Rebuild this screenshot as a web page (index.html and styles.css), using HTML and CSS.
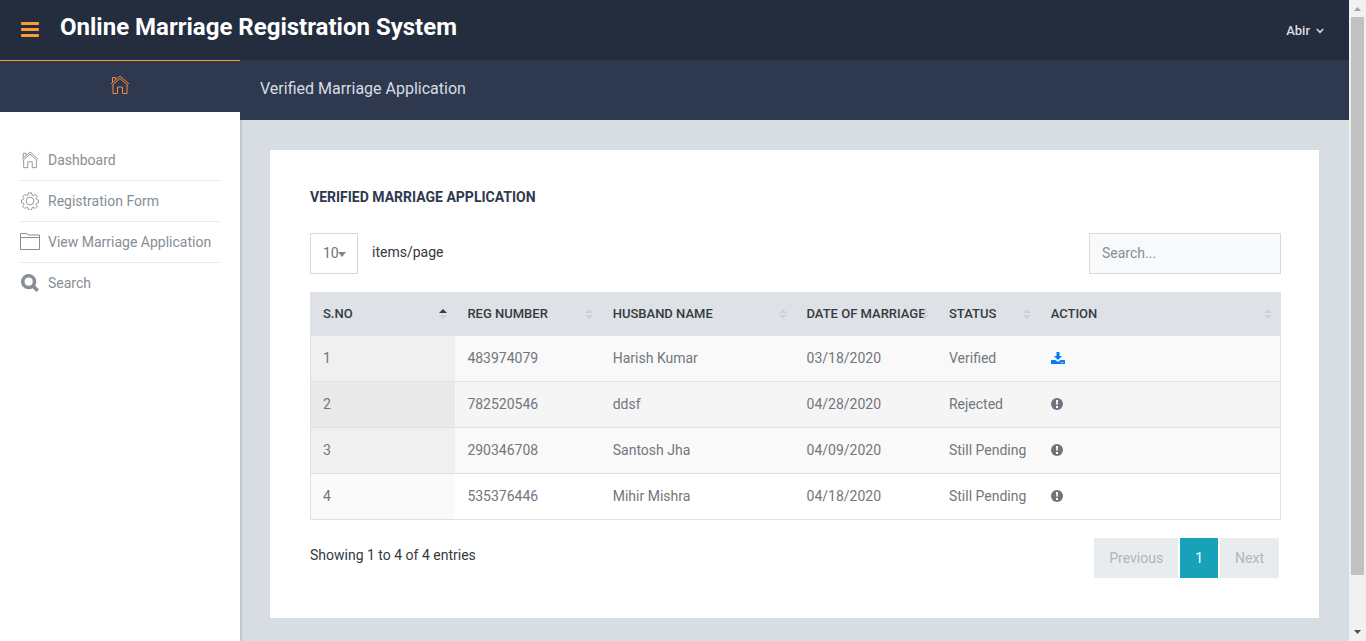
FILE: index.html
```html
<!DOCTYPE html>
<html lang="en">
<head>
<meta charset="utf-8">
<title>Online Marriage Registration System</title>
<link rel="stylesheet" href="styles.css">
</head>
<body>
<svg class="defs" aria-hidden="true">
  <symbol id="home" viewBox="0 0 20 20"><path d="M1 9 10 1l9 8M2 10.500 10 3.500l8 7M2.500 7.500V2.500h3v2.300M3 10V18.500h4.500v-6.500h5v6.500H17V10"/></symbol>
  <symbol id="gear" viewBox="0 0 20 20"><path d="M8.200 1h3.600l.5 2.500 1.300.6 2.200-1.500 2.300 2.400-1.400 2.200.6 1.200 2.200.5v3l-2.200.6-.6 1.400 1.400 2.100-2.300 2.300-2.200-1.300-1.300.5-.5 2.400H8.200l-.5-2.400-1.300-.5-2.200 1.300-2.300-2.300 1.400-2.100-.6-1.400-2.200-.6v-3l2.200-.5.6-1.200-1.400-2.200 2.300-2.400 2.200 1.500 1.300-.6z"/><circle cx="10" cy="10" r="4.300"/></symbol>
  <symbol id="folder" viewBox="0 0 20 20"><path d="M.5 17.500V1.500h6.500l1 1.500h11.500v14.500zM.5 5.500h19"/></symbol>
  <symbol id="alert" viewBox="0 0 12 12"><circle cx="6" cy="6" r="6" fill="currentColor"/><path d="M5 2h2l-.3 4.700H5.300zM5 8h2v2H5z" fill="#fff"/></symbol>
</svg>
<div class="page">
  <header class="header">
    <button class="toggle" aria-label="Toggle menu"><span></span><span></span><span></span></button>
    <h1 class="brand">Online Marriage Registration System</h1>
    <button class="user">Abir <svg class="chevron" viewBox="0 0 8 6"><path d="M.8 1 4 4.300 7.200 1"/></svg></button>
  </header>
  <div class="layout">
    <aside class="sidebar">
      <a class="home-tab" href="#" aria-label="Home"><svg class="icon"><use href="#home"/></svg></a>
      <nav class="nav">
        <a href="#"><svg class="icon icon-thin"><use href="#home"/></svg>Dashboard</a>
        <a href="#"><svg class="icon icon-thin"><use href="#gear"/></svg>Registration Form</a>
        <a href="#"><svg class="icon"><use href="#folder"/></svg>View Marriage Application</a>
        <a href="#"><svg class="icon icon-bold" viewBox="0 0 20 20"><circle cx="8.500" cy="8.500" r="6.500"/><path d="m13 13 5.500 5.500"/></svg>Search</a>
      </nav>
    </aside>
    <main class="main">
      <div class="crumb">Verified Marriage Application</div>
      <section class="card">
        <h2 class="card-title">Verified Marriage Application</h2>
        <div class="tools">
          <label class="length"><span class="select"><select><option>10</option><option>25</option><option>50</option></select></span>items/page</label>
          <input class="search" type="search" placeholder="Search..." aria-label="Search">
        </div>
        <table class="table">
          <colgroup><col class="c-no"><col class="c-reg"><col class="c-name"><col class="c-date"><col class="c-status"><col></colgroup>
          <thead><tr><th class="asc">S.No</th><th>Reg Number</th><th>Husband Name</th><th>Date of Marriage</th><th>Status</th><th>Action</th></tr></thead>
          <tbody>
            <tr class="odd"><td>1</td><td>483974079</td><td>Harish Kumar</td><td>03/18/2020</td><td>Verified</td><td><a class="download" href="#" aria-label="Download"><svg class="act" viewBox="0 0 14 12"><path d="M5.500 0h3v4H11L7 8 3 4h2.500zM.5 8h3.800L7 10l2.700-2h3.800l.5.500V12H0V8.500z" fill="currentColor"/><path d="M9.500 10.500h3" stroke="#fff" stroke-opacity=".6" fill="none"/></svg></a></td></tr>
            <tr class="hover"><td>2</td><td>782520546</td><td>ddsf</td><td>04/28/2020</td><td>Rejected</td><td><svg class="act act-alert"><use href="#alert"/></svg></td></tr>
            <tr class="odd"><td>3</td><td>290346708</td><td>Santosh Jha</td><td>04/09/2020</td><td>Still Pending</td><td><svg class="act act-alert"><use href="#alert"/></svg></td></tr>
            <tr><td>4</td><td>535376446</td><td>Mihir Mishra</td><td>04/18/2020</td><td>Still Pending</td><td><svg class="act act-alert"><use href="#alert"/></svg></td></tr>
          </tbody>
        </table>
        <div class="foot">
          <p class="info">Showing 1 to 4 of 4 entries</p>
          <div class="pager"><button disabled>Previous</button><button class="current">1</button><button disabled>Next</button></div>
        </div>
      </section>
    </main>
  </div>
</div>
<div class="scrollbar" aria-hidden="true">
  <svg class="arrow" viewBox="0 0 17 17"><path d="M5 11h7L8.500 7z" fill="#a3a3a3"/></svg>
  <div class="track"><div class="thumb"></div></div>
  <svg class="arrow" viewBox="0 0 17 17"><path d="M5 6h7L8.500 10z" fill="#505050"/></svg>
</div>
</body>
</html>
```
FILE: styles.css
```css
* { box-sizing: border-box; }
body {
  margin: 0;
  display: flex;
  height: 100vh;
  overflow: hidden;
  font: 14px/20px Roboto, "Liberation Sans", sans-serif;
  color: #343a40;
  background: #d8dce3;
}
button, input, select { font: inherit; border: 0; border-radius: 0; margin: 0; }
button { cursor: pointer; }
a { text-decoration: none; color: inherit; }
.defs { position: absolute; width: 0; height: 0; }
.page { flex: 1; min-width: 0; display: flex; flex-direction: column; }

.header {
  display: flex;
  align-items: center;
  height: 60px;
  padding: 0 24px 0 20px;
  background: #232d3e;
}
.toggle {
  display: flex;
  flex-direction: column;
  gap: 3px;
  width: 20px;
  padding: 0 1px 2px;
  background: none;
}
.toggle span { height: 3px; border-radius: 1px; background: #ff9933; }
.brand {
  margin: 0 0 6px 20px;
  font-size: 24px;
  line-height: 30px;
  font-weight: 700;
  color: #fff;
}
.user {
  display: flex;
  align-items: center;
  gap: 6px;
  margin-left: auto;
  padding: 2px 1px 0 0;
  font-size: 13px;
  font-weight: 500;
  color: #d8dce3;
  background: none;
}
.chevron { width: 8px; height: 6px; fill: none; stroke: currentColor; stroke-width: 1.500; }

.layout { flex: 1; display: flex; min-height: 0; }
.sidebar {
  width: 240px;
  flex: none;
  background: #fff;
  box-shadow: 0 0 3px rgba(43, 55, 80, .4);
}
.home-tab {
  display: flex;
  justify-content: center;
  height: 52px;
  padding-top: 14px;
  border-top: 1px solid #ff9933;
  color: #f28b3c;
  background: #2e3950;
}
.icon { width: 20px; height: 20px; fill: none; stroke: currentColor; stroke-width: 1; }
.icon-thin { padding: 1px; }
.icon-bold { padding: 1px; stroke-width: 4; }
.nav { padding: 28px 20px; color: #868e96; }
.nav a { display: flex; align-items: center; gap: 8px; height: 41px; border-bottom: 1px solid #e9ecef; }
.nav a:last-child { border-bottom-color: transparent; }

.main { flex: 1; min-width: 0; }
.crumb {
  height: 60px;
  padding: 19px 20px;
  font-size: 16px;
  color: #d8dce3;
  line-height: 20px;
  background: #2e3950;
}
.card { margin: 30px; padding: 38px 38px 40px 40px; background: #fff; }
.card-title {
  margin: 0 0 26px;
  font-size: 14px;
  line-height: 19px;
  font-weight: 700;
  text-transform: uppercase;
  color: #2e3950;
}
.tools { display: flex; justify-content: space-between; height: 41px; margin-bottom: 18px; }
.length { display: flex; gap: 14px; line-height: 38px; }
.select { position: relative; display: flex; width: 48px; }
.select select {
  appearance: none;
  width: 100%;
  padding: 0 12px 2px;
  border: 1px solid #d5d8dc;
  color: #6c757d;
  background: #fff;
}
.select::after {
  content: "";
  position: absolute;
  top: 19px;
  right: 12px;
  border: 4px solid transparent;
  border-top: 5px solid #868686;
  border-bottom: 0;
}
.search { width: 192px; padding: 0 12px 2px; border: 1px solid #d5d8dc; background: #f8f9fb; }
.search::placeholder { color: #868e96; opacity: 1; }

.table {
  width: 100%;
  table-layout: fixed;
  border-collapse: separate;
  border-spacing: 0;
  border: 1px solid #dee2e6;
  border-top: 0;
  color: #71777d;
}
.c-no { width: 14.900%; }
.c-reg { width: 15%; }
.c-name { width: 20%; }
.c-date { width: 14.700%; }
.c-status { width: 10.500%; }
.table th {
  position: relative;
  height: 44px;
  padding: 0 0 0 12px;
  text-align: left;
  text-transform: uppercase;
  white-space: nowrap;
  font-size: 13px;
  font-weight: 500;
  color: #343a40;
  background: #dee2e6;
}
.table th::before, .table th::after {
  content: "";
  position: absolute;
  right: 8px;
  border: 4px solid transparent;
}
.table th::before { top: 17px; border-top: 0; border-bottom-color: #ced2d7; }
.table th::after { top: 23px; border-bottom: 0; border-top-color: #ced2d7; }
.table th.asc::before { border-bottom-color: #343a40; }
.table td { height: 46px; padding: 0 12px 2px; border-bottom: 1px solid #dee2e6; background: #fff; }
.table td:first-child { background: #fafafa; }
.table .odd td { background: #f9f9f9; }
.table .odd td:first-child { background: #f0f0f0; }
.table .hover td { background: #f5f5f5; }
.table .hover td:first-child { background: #e9e9e9; }
.table tr:last-child td { height: 45px; border-bottom: 0; }
.act { display: block; width: 14px; height: 12px; }
.act-alert { width: 12px; color: #6c757d; }
.download { color: #007bff; }

.foot { display: flex; justify-content: space-between; padding: 18px 2px 0 0; }
.info { margin: 0; line-height: 34px; }
.pager { display: flex; gap: 2px; }
.pager button { height: 40px; padding: 0 15px; color: #adb5bd; background: #e9ecef; }
.pager .current { color: #fff; background: #17a2b8; }

.scrollbar { display: flex; flex-direction: column; width: 17px; background: #f1f1f1; }
.arrow { width: 17px; height: 17px; }
.track { flex: 1; padding: 0 2px; }
.thumb { height: 92%; background: #c1c1c1; }
```
